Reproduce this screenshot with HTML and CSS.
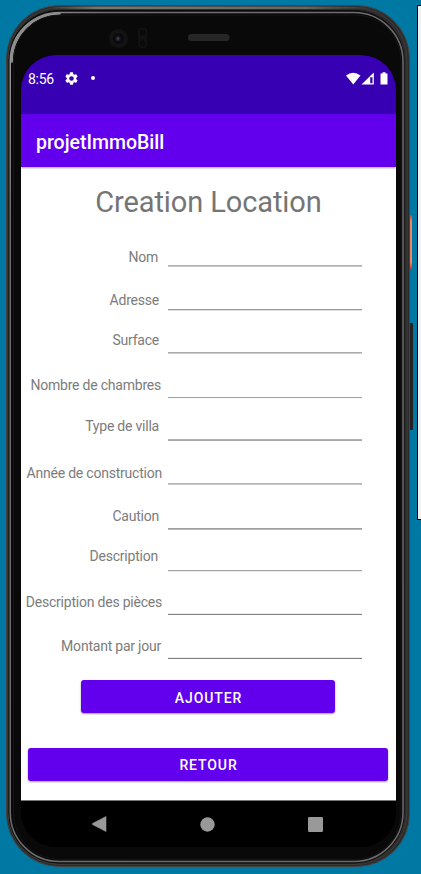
FILE: index.html
```
<!DOCTYPE html>
<html lang="fr">
<head>
<meta charset="utf-8">
<title>projetImmoBill</title>
<link rel="stylesheet" href="styles.css">
</head>
<body>
<div class="side-window"></div>
<div class="phone">
  <svg class="bezel" width="410" height="866" viewBox="4 3 410 866" aria-hidden="true">
    <defs>
      <linearGradient id="shine" x1="0" x2="1" y1="0" y2="1"><stop offset="0" stop-color="#a0a0a0"/><stop offset=".12" stop-color="#707070"/><stop offset="1" stop-color="#6c6c6c"/></linearGradient>
      <linearGradient id="power" x1="0" x2="0" y1="0" y2="1"><stop offset="0" stop-color="#b04d3a"/><stop offset=".12" stop-color="#ee8569"/><stop offset=".88" stop-color="#ee8569"/><stop offset="1" stop-color="#b83a28"/></linearGradient>
      <linearGradient id="top" gradientUnits="userSpaceOnUse" x1="50" x2="370" y1="0" y2="0"><stop offset="0" stop-color="#777" stop-opacity="0"/><stop offset=".15" stop-color="#777"/><stop offset=".8" stop-color="#666"/><stop offset="1" stop-color="#555" stop-opacity="0"/></linearGradient>
    </defs>
    <rect x="408" y="215" width="4" height="54" rx="1" fill="url(#power)"/>
    <rect x="408" y="323" width="5" height="107" rx="1" fill="#222"/>
    <rect x="6.500" y="5.500" width="403" height="861" rx="53" fill="#2c2c2c" stroke="#444" stroke-width="1"/>
    <rect x="8" y="7.500" width="399" height="857" rx="52" fill="none" stroke="#3c3c3c" stroke-width="1"/>
    <rect x="50" y="6.500" width="320" height="2.500" fill="url(#top)"/>
    <rect x="9" y="10.500" width="395" height="852.500" rx="50" fill="#08080a" stroke="#0c0c0c" stroke-width="1"/>
    <rect x="10.250" y="12.500" width="392.750" height="849" rx="49" fill="#08080a" stroke="url(#shine)" stroke-width="1.500"/>
    <path d="M11.700 61.500A48 48 0 0 1 59.500 13.700" fill="none" stroke="#8d8d8d" stroke-width="2.500" stroke-linecap="round"/>
    <rect x="13.500" y="15" width="387.500" height="844.500" rx="46" fill="#09090a" stroke="#151515"/>
    <circle cx="118.500" cy="38.500" r="9.500" fill="#131314"/>
    <circle cx="118.500" cy="38.500" r="5.500" fill="#0b0b0e"/>
    <circle cx="118" cy="38.500" r="2.600" fill="#1f1f2a"/>
    <circle cx="118" cy="38.500" r="1" fill="#4c4c66"/>
    <rect x="138" y="28" width="9" height="20" rx="3" fill="#111112"/>
    <circle cx="142.500" cy="32.500" r="3" fill="#0a0a0a"/>
    <circle cx="142.500" cy="43.500" r="3" fill="#0a0a0a"/>
    <rect x="188" y="34" width="41.500" height="7" rx="3" fill="#262626"/>
  </svg>
  <main class="screen">
    <header class="status">
      <span class="time">8:56</span>
      <svg class="gear" viewBox="2 2 20 20"><path fill="#fff" fill-rule="evenodd" d="M19.14 12.940c.04-.3.060-.610.060-.940 0-.320-.020-.640-.070-.940l2.030-1.580c.18-.14.230-.410.120-.610l-1.920-3.320c-.12-.22-.37-.29-.59-.22l-2.390.960c-.5-.38-1.030-.7-1.620-.94l-.36-2.540c-.04-.24-.24-.41-.48-.41h-3.840c-.24 0-.43.170-.47.410l-.36 2.540c-.59.240-1.130.570-1.620.940l-2.390-.96c-.22-.08-.47 0-.59.220L2.740 8.870c-.12.210-.08.470.120.610l2.030 1.580c-.05.300-.09.630-.09.940s.020.640.070.940l-2.030 1.580c-.18.140-.23.410-.12.610l1.920 3.320c.12.220.37.290.59.220l2.390-.96c.5.380 1.030.700 1.620.940l.36 2.540c.05.240.24.410.48.410h3.840c.24 0 .44-.17.470-.41l.36-2.540c.59-.24 1.130-.56 1.620-.94l2.390.960c.22.080.470 0 .59-.22l1.920-3.320c.12-.22.070-.47-.12-.61l-2.010-1.580zM12 15.600a3.600 3.600 0 1 1 0-7.200 3.600 3.600 0 0 1 0 7.200z"/></svg>
      <span class="dot"></span>
      <svg class="signals" width="44" height="14" viewBox="0 0 44 14">
        <path fill="#fff" d="M0 3.500Q7.200-2 14.500 3.500L7.250 12.500Z"/>
        <path fill="#fff" d="M27.800.5V12.500H15.500Z"/>
        <path fill="#3700b3" d="M24.200 5.200H26.500V11.300H24.200Z"/>
        <path fill="#fff" d="M36.500.200h3v1.300h2v11h-7v-11h2z"/>
      </svg>
    </header>
    <div class="appbar">projetImmoBill</div>
    <section class="content">
      <h1>Creation Location</h1>
      <form class="form">
        <div class="row nom"><label>Nom</label><span class="field"></span></div>
        <div class="row adresse"><label>Adresse</label><span class="field"></span></div>
        <div class="row surface"><label>Surface</label><span class="field"></span></div>
        <div class="row chambres"><label>Nombre de chambres</label><span class="field"></span></div>
        <div class="row villa"><label>Type de villa</label><span class="field"></span></div>
        <div class="row annee"><label>Année de construction</label><span class="field"></span></div>
        <div class="row caution"><label>Caution</label><span class="field"></span></div>
        <div class="row description"><label>Description</label><span class="field"></span></div>
        <div class="row pieces"><label>Description des pièces</label><span class="field"></span></div>
        <div class="row montant"><label>Montant par jour</label><span class="field"></span></div>
        <button type="button" class="add">AJOUTER</button>
        <button type="button" class="back">RETOUR</button>
      </form>
    </section>
    <nav class="nav">
      <svg width="15" height="16" viewBox="0 0 15 16"><path fill="#999" d="M14 .500V15.500L.5 8.500V7.500Z" stroke="#999" stroke-linejoin="round" stroke-width=".6"/></svg>
      <svg width="15" height="15" viewBox="0 0 15 15"><circle cx="7.500" cy="7.500" r="7.200" fill="#999"/></svg>
      <svg width="15" height="15" viewBox="0 0 15 15"><rect width="15" height="15" rx="1.300" fill="#999"/></svg>
    </nav>
  </main>
</div>
</body>
</html>
```
FILE: styles.css
```
* { box-sizing: border-box; }
body {
  margin: 0;
  width: 421px;
  height: 874px;
  overflow: hidden;
  background: #0078a4;
  font-family: Roboto, "Liberation Sans", sans-serif;
}
.side-window {
  position: absolute;
  left: 417px;
  top: 5px;
  width: 20px;
  height: 515px;
  border: 1px solid #000;
  background: #f0f0f5;
}
.phone {
  position: relative;
  padding: 55px 0 0 21px;
}
.bezel { position: absolute; left: 4px; top: 3px; }
.screen {
  position: relative;
  display: flex;
  flex-direction: column;
  width: 375px;
  height: 792px;
  border-radius: 35px;
  overflow: hidden;
  background: #000;
}
.status {
  display: flex;
  align-items: center;
  height: 59px;
  padding: 0 8px 12px 7px;
  background: #3700b3;
  color: #fff;
}
.time { width: 27px; font-size: 14px; letter-spacing: -.3px; }
.gear { width: 13px; height: 13px; margin-left: 10px; margin-top: -1px; }
.dot { width: 4px; height: 4px; border-radius: 50%; background: #fff; margin-left: 13px; margin-top: -1px; }
.signals { margin-left: auto; margin-right: -2px; }
.appbar {
  position: relative;
  height: 53px;
  padding-left: 15px;
  line-height: 57px;
  background: #6200ee;
  color: #fff;
  font-size: 19.5px;
  font-weight: 500;
  box-shadow: 0 1px 2px rgba(0, 0, 0, .35);
}
.content { flex: 1; background: #fff; }
h1 {
  margin: 0;
  padding-top: 18px;
  height: 58px;
  line-height: 34px;
  text-align: center;
  font-size: 29px;
  font-weight: 400;
  letter-spacing: -.1px;
  color: #757575;
}
.form { display: flex; flex-direction: column; }
.row {
  display: grid;
  grid-template-columns: 147px 194px;
  align-items: end;
  height: var(--height);
}
.row label {
  justify-self: end;
  white-space: nowrap;
  font-size: 14px;
  line-height: 16px;
  letter-spacing: -.22px;
  color: #7c7c7c;
  padding-right: var(--inset);
  padding-bottom: var(--drop);
}
.field {
  height: 2px;
  background: linear-gradient(var(--upper) 50%, var(--lower) 50%);
}
.nom { --height: 42px; --inset: 10px; --drop: 2px; --upper: #b2b2b2; --lower: #c5c5c5; }
.adresse { --height: 44px; --inset: 9px; --drop: 3px; --upper: #9a9a9a; --lower: #dedede; }
.surface { --height: 43px; --inset: 9px; --drop: 6px; --upper: #aaa; --lower: #cdcdcd; }
.chambres { --height: 45px; --inset: 7px; --drop: 6px; --upper: #a0a0a0; --lower: #f9f9f9; }
.villa { --height: 42px; --inset: 9px; --drop: 7px; --upper: #b0b0b0; --lower: #a8a8a8; }
.annee { --height: 44px; --inset: 6px; --drop: 4px; --upper: #b5b5b5; --lower: #c8c8c8; }
.caution { --height: 45px; --inset: 9px; --drop: 6px; --upper: #a0a0a0; --lower: #b5b5b5; }
.description { --height: 42px; --inset: 10px; --drop: 8px; --upper: #a0a0a0; --lower: #ededed; }
.pieces { --height: 43px; --inset: 6px; --drop: 5px; --upper: #ededed; --lower: #828282; }
.montant { --height: 44px; --inset: 7px; --drop: 5px; --upper: #eee; --lower: #808080; }
button {
  border: 0;
  padding: 0;
  height: 33px;
  border-radius: 3px;
  background: #6200ee;
  color: #fff;
  font: 500 14px/35px Roboto, sans-serif;
  letter-spacing: .9px;
  box-shadow: 0 1px 2px rgba(0, 0, 0, .4);
}
.add { width: 254px; margin: 21px 0 0 60px; padding: 1px 0 0 1px; }
.back { width: 360px; margin: 35px 0 0 7px; padding: 0 0 1px 1px; }
.nav {
  display: flex;
  align-items: center;
  justify-content: space-between;
  height: 47px;
  padding: 0 73px 0 71px;
  border-top: 1px solid #777;
  background: #000;
}
```
